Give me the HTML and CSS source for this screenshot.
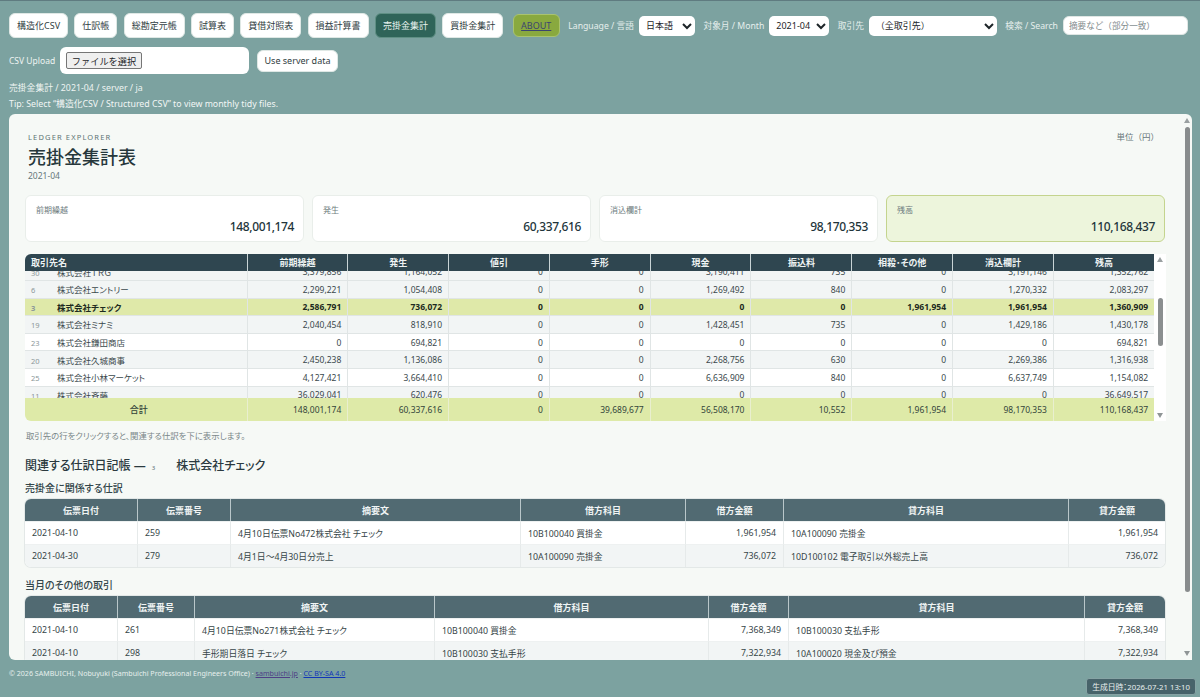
FILE: index.html
```html
<!DOCTYPE html>
<html lang="ja">
<head>
<meta charset="utf-8">
<title>売掛金集計表</title>
<link rel="stylesheet" href="styles.css">
</head>
<body>
<header class="top">
  <div class="row-nav">
    <nav class="tabs">
      <button class="tab">構造化CSV</button>
      <button class="tab">仕訳帳</button>
      <button class="tab">総勘定元帳</button>
      <button class="tab">試算表</button>
      <button class="tab">貸借対照表</button>
      <button class="tab">損益計算書</button>
      <button class="tab active">売掛金集計</button>
      <button class="tab">買掛金集計</button>
    </nav>
    <a class="about" href="#">ABOUT</a>
    <label class="field">Language / 言語
      <select class="sel sel-lang"><option>日本語</option></select>
    </label>
    <label class="field">対象月 / Month
      <select class="sel sel-month"><option>2021-04</option></select>
    </label>
    <label class="field">取引先
      <select class="sel sel-party"><option>（全取引先）</option></select>
    </label>
    <label class="field">検索 / Search
      <input class="search" placeholder="摘要など（部分一致）">
    </label>
  </div>
  <div class="row-upload">
    <span class="upl-label">CSV Upload</span>
    <span class="filebox"><span class="filebtn">ファイルを選択</span></span>
    <button class="tab server">Use server data</button>
  </div>
  <div class="crumb">売掛金集計 / 2021-04 / server / ja</div>
  <div class="tip">Tip: Select “構造化CSV / Structured CSV” to view monthly tidy files.</div>
</header>

<main class="panel">
  <div class="sb-main">
    <span class="arrow up"></span><span class="thumb"></span><span class="arrow down"></span>
  </div>
  <div class="head">
    <div>
      <div class="eyebrow">LEDGER EXPLORER</div>
      <h1>売掛金集計表</h1>
      <div class="period">2021-04</div>
    </div>
    <div class="unit">単位（円）</div>
  </div>

  <section class="cards">
    <div class="card"><div class="card-l">前期繰越</div><div class="card-v">148,001,174</div></div>
    <div class="card"><div class="card-l">発生</div><div class="card-v">60,337,616</div></div>
    <div class="card"><div class="card-l">消込欄計</div><div class="card-v">98,170,353</div></div>
    <div class="card hi"><div class="card-l">残高</div><div class="card-v">110,168,437</div></div>
  </section>

  <section class="ledger">
    <div class="ledger-main">
      <table class="lt lt-head">
        <colgroup><col class="c-name"><col span="9" class="c-num"></colgroup>
        <tr><th class="left">取引先名</th><th>前期繰越</th><th>発生</th><th>値引</th><th>手形</th><th>現金</th><th>振込料</th><th>相殺･その他</th><th>消込欄計</th><th>残高</th></tr>
      </table>
      <div class="lt-clip">
        <table class="lt lt-body">
          <colgroup><col class="c-name"><col span="9" class="c-num"></colgroup>
          <tr class="alt"><td class="nm"><i>30</i>株式会社ＴＲＧ</td><td>3,379,856</td><td>1,164,052</td><td>0</td><td>0</td><td>3,190,411</td><td>735</td><td>0</td><td>3,191,146</td><td>1,352,762</td></tr>
          <tr class="alt"><td class="nm"><i>6</i>株式会社エントリー</td><td>2,299,221</td><td>1,054,408</td><td>0</td><td>0</td><td>1,269,492</td><td>840</td><td>0</td><td>1,270,332</td><td>2,083,297</td></tr>
          <tr class="sel-row"><td class="nm"><i>3</i>株式会社チェック</td><td>2,586,791</td><td>736,072</td><td>0</td><td>0</td><td>0</td><td>0</td><td>1,961,954</td><td>1,961,954</td><td>1,360,909</td></tr>
          <tr class="alt"><td class="nm"><i>19</i>株式会社ミナミ</td><td>2,040,454</td><td>818,910</td><td>0</td><td>0</td><td>1,428,451</td><td>735</td><td>0</td><td>1,429,186</td><td>1,430,178</td></tr>
          <tr><td class="nm"><i>23</i>株式会社鎌田商店</td><td>0</td><td>694,821</td><td>0</td><td>0</td><td>0</td><td>0</td><td>0</td><td>0</td><td>694,821</td></tr>
          <tr class="alt"><td class="nm"><i>20</i>株式会社久城商事</td><td>2,450,238</td><td>1,136,086</td><td>0</td><td>0</td><td>2,268,756</td><td>630</td><td>0</td><td>2,269,386</td><td>1,316,938</td></tr>
          <tr><td class="nm"><i>25</i>株式会社小林マーケット</td><td>4,127,421</td><td>3,664,410</td><td>0</td><td>0</td><td>6,636,909</td><td>840</td><td>0</td><td>6,637,749</td><td>1,154,082</td></tr>
          <tr class="alt"><td class="nm"><i>11</i>株式会社斉藤</td><td>36,029,041</td><td>620,476</td><td>0</td><td>0</td><td>0</td><td>0</td><td>0</td><td>0</td><td>36,649,517</td></tr>
        </table>
      </div>
      <table class="lt lt-foot">
        <colgroup><col class="c-name"><col span="9" class="c-num"></colgroup>
        <tr><td class="tot">合計</td><td>148,001,174</td><td>60,337,616</td><td>0</td><td>39,689,677</td><td>56,508,170</td><td>10,552</td><td>1,961,954</td><td>98,170,353</td><td>110,168,437</td></tr>
      </table>
    </div>
    <div class="sb-inner">
      <span class="arrow up"></span><span class="thumb"></span><span class="arrow down"></span>
    </div>
  </section>
  <p class="hint">取引先の行をクリックすると、関連する仕訳を下に表示します。</p>

  <h2 class="rel">関連する仕訳日記帳 — <small>3</small><span>株式会社チェック</span></h2>
  <h3>売掛金に関係する仕訳</h3>
  <table class="jt jt-a">
    <colgroup><col class="a1"><col class="a2"><col class="a3"><col class="a4"><col class="a5"><col class="a6"><col class="a7"></colgroup>
    <tr><th>伝票日付</th><th>伝票番号</th><th>摘要文</th><th>借方科目</th><th>借方金額</th><th>貸方科目</th><th>貸方金額</th></tr>
    <tr><td>2021-04-10</td><td>259</td><td>4月10日伝票No472株式会社 チェック</td><td>10B100040 買掛金</td><td class="r">1,961,954</td><td>10A100090 売掛金</td><td class="r">1,961,954</td></tr>
    <tr class="even"><td>2021-04-30</td><td>279</td><td>4月1日～4月30日分売上</td><td>10A100090 売掛金</td><td class="r">736,072</td><td>10D100102 電子取引以外総売上高</td><td class="r">736,072</td></tr>
  </table>
  <h3 class="second">当月のその他の取引</h3>
  <table class="jt jt-b">
    <colgroup><col class="b1"><col class="b2"><col class="b3"><col class="b4"><col class="b5"><col class="b6"><col class="b7"></colgroup>
    <tr><th>伝票日付</th><th>伝票番号</th><th>摘要文</th><th>借方科目</th><th>借方金額</th><th>貸方科目</th><th>貸方金額</th></tr>
    <tr><td>2021-04-10</td><td>261</td><td>4月10日伝票No271株式会社 チェック</td><td>10B100040 買掛金</td><td class="r">7,368,349</td><td>10B100030 支払手形</td><td class="r">7,368,349</td></tr>
    <tr class="even"><td>2021-04-10</td><td>298</td><td>手形期日落日 チェック</td><td>10B100030 支払手形</td><td class="r">7,322,934</td><td>10A100020 現金及び預金</td><td class="r">7,322,934</td></tr>
  </table>
</main>

<footer class="foot">© 2026 SAMBUICHI, Nobuyuki (Sambuichi Professional Engineers Office) · <a class="visited" href="#">sambuichi.jp</a> · <a class="link" href="#">CC BY-SA 4.0</a></footer>
<div class="stamp">生成日時：2026-07-21 13:10</div>
</body>
</html>
```

FILE: styles.css
```css
* { box-sizing: border-box; }
html, body { height: 100%; }
body {
  margin: 0;
  height: 697px;
  overflow: hidden;
  position: relative;
  display: flex;
  flex-direction: column;
  background: #7ca2a0;
  border-top: 1px solid #5f7b80;
  color: #2b3a3f;
  font-family: "Noto Sans", "Noto Sans CJK JP", sans-serif;
  font-size: 9px;
  font-feature-settings: "palt";
}
.top { padding: 12px 9px 0 9px; color: #eef4f2; height: 113px; flex: none; }
.row-nav { display: flex; align-items: center; height: 25px; }
.tabs { display: flex; gap: 6.3px; }
.tab {
  height: 25px;
  padding: 0 7px;
  border: 1px solid #dfe8e5;
  border-radius: 6px;
  background: #fff;
  color: #2f3d42;
  font: inherit;
  font-size: 9px;
  white-space: nowrap;
  font-feature-settings: normal;
}
.tab.active { background: #2f6459; border-color: #5f8f84; color: #e8f2ee; }
.about {
  margin-left: 9.5px;
  width: 47px;
  height: 23px;
  display: flex;
  align-items: center;
  justify-content: center;
  background: #89a93f;
  border: 1px solid #a9c36f;
  border-radius: 6px;
  color: #3b4470;
  font-size: 9px;
}
.field { display: flex; align-items: center; gap: 5px; margin-left: 8.5px; white-space: nowrap; font-size: 8.7px; color: #e6efed; }
.sel {
  height: 20px;
  border: none;
  border-radius: 5px;
  background: #fff;
  color: #1d2528;
  font: inherit;
  font-size: 9px;
  padding: 0 0 0 3px;
  font-feature-settings: normal;
}
.sel-lang { width: 56px; }
.sel-month { width: 60px; }
.sel-party { width: 128px; }
.search {
  width: 125px;
  height: 19px;
  border: 1px solid #dfe6e4;
  border-radius: 6px;
  padding: 0 5px;
  font: inherit;
  font-size: 8.6px;
  font-feature-settings: normal;
}
.search::placeholder { color: #808a8c; }
.row-upload { display: flex; align-items: center; margin-top: 9px; height: 27px; }
.upl-label { font-size: 8.5px; width: 51px; color: #eef4f2; }
.filebox { width: 189px; height: 27px; background: #fff; border-radius: 6px; padding: 5px 6px; color: #1d2528; }
.filebtn {
  display: flex;
  width: 76px;
  height: 17px;
  align-items: center;
  justify-content: center;
  background: #efefef;
  border: 1px solid #767676;
  border-radius: 2px;
  font-size: 9.2px;
  font-feature-settings: normal;
}
.server { margin-left: 8px; height: 22px; font-size: 9px; width: 81px; padding: 0; }
.crumb { margin-top: 8px; font-size: 8.8px; line-height: 12px; color: #eef4f2; }
.tip { margin-top: 4px; font-size: 8.8px; line-height: 12px; color: #f2f6f5; }

.panel {
  position: relative;
  flex: none;
  height: 546px;
  margin: 0 8px 0 9px;
  padding: 17px 26px 0 16px;
  background: #f6f9f6;
  border-radius: 6px 6px 0 6px;
  overflow: hidden;
}
.head { display: flex; justify-content: space-between; padding-left: 3px; height: 64px; }
.eyebrow { font-size: 7.5px; line-height: 12px; letter-spacing: 1.15px; color: #5d7474; }
h1 { margin: 2px 0 0 0; font-size: 18px; line-height: 24px; font-weight: 500; color: #26373b; }
.period { font-size: 8.5px; line-height: 12px; margin-top: 1px; color: #66777a; }
.unit { font-size: 8.5px; line-height: 12px; color: #66777a; margin-right: 7px; font-feature-settings: normal; }
.cards { display: grid; grid-template-columns: repeat(4, 279px); gap: 8px; }
.card { height: 47px; background: #fff; border: 1px solid #e9eeea; border-radius: 6px; padding: 8px 9px 0 10px; }
.card.hi { background: #edf5dc; border-color: #c4d48e; }
.card-l { font-size: 8px; line-height: 11px; color: #6c7a7c; }
.card-v { text-align: right; font-size: 12px; line-height: 16px; margin-top: 4px; letter-spacing: -.38px; color: #22343a; font-weight: 500; }

.ledger { display: flex; margin-top: 12px; width: 1141px; height: 167px; }
.ledger-main { width: 1129px; flex: none; border-radius: 6px 0 0 6px; overflow: hidden; }
.lt { width: 1129px; border-collapse: collapse; table-layout: fixed; font-size: 8.5px; }
.c-name { width: 222px; }
.c-num { width: 100.8px; }
.lt th {
  height: 17px;
  padding: 0 6px;
  background: #2f4650;
  color: #eef3f3;
  font-size: 9px;
  font-weight: 700;
  border-left: 1px solid #c9d4d6;
}
.lt th:first-child { border-left: none; }
.lt th.left { text-align: left; }
.lt-clip { height: 127px; overflow: hidden; }
.lt-body { margin-top: -8.6px; background: #fff; }
.lt-body td {
  height: 17.6px;
  padding: 0 6px;
  text-align: right;
  border: 1px solid #e0e5e5;
  border-width: 1px 0 1px 1px;
  color: #3a484c;
  white-space: nowrap;
}
.lt-body .alt td { background: #f2f5f5; }
.lt-body .sel-row td { background: #dfe9a9; font-weight: 700; color: #1d2a20; }
.lt-body td.nm { text-align: left; border-left: none; }
.nm i { display: inline-block; width: 26px; font-style: normal; color: #8b9799; font-size: 7.5px; }
.lt-foot td {
  height: 23px;
  padding: 0 6px;
  text-align: right;
  background: #deeaa8;
  border-left: 1px solid #e9efcf;
  color: #33443a;
}
.lt-foot td.tot { text-align: center; border-left: none; padding-left: 12px; padding-right: 6px; font-size: 9px; font-weight: 500; }
.sb-inner, .sb-main { display: flex; flex-direction: column; align-items: center; justify-content: space-between; }
.sb-inner { width: 12px; background: #fff; padding: 3px 0; position: relative; }
.sb-inner .thumb { position: absolute; top: 44px; left: 3.5px; width: 5px; height: 48px; background: #8b8f90; border-radius: 3px; }
.sb-main { position: absolute; top: 0; right: 0; bottom: 0; width: 10px; padding: 4px 0; }
.sb-main .thumb { position: absolute; top: 13px; left: 2.5px; width: 5px; height: 465px; background: #888c8d; border-radius: 3px; }
.arrow { width: 0; height: 0; border-left: 3px solid transparent; border-right: 3px solid transparent; }
.arrow.up { border-bottom: 5px solid #9aa0a1; }
.arrow.down { border-top: 5px solid #8f9596; }

.hint { margin: 9px 0 0 1px; font-size: 8.4px; line-height: 12px; color: #7a8789; }
.rel { margin: 15px 0 0 0; font-size: 12px; line-height: 18px; font-weight: 500; color: #2b3a3f; }
.rel small { font-size: 6px; color: #66777a; margin-left: 3px; }
.rel span { margin-left: 21px; font-weight: 500; }
h3 { margin: 4px 0 0 0; font-size: 10px; line-height: 14px; font-weight: 500; color: #33464a; }
h3.second { margin-top: 11px; }
.jt {
  width: 1140px;
  margin-top: 4px;
  border-collapse: separate;
  border-spacing: 0;
  table-layout: fixed;
  font-size: 8.8px;
  background: #fff;
  border-radius: 6px;
  overflow: hidden;
  box-shadow: 0 0 0 1px #e3e8e7;
}
.jt th {
  height: 22px;
  background: #516a72;
  color: #f0f4f4;
  font-size: 9px;
  font-weight: 700;
  border-left: 1px solid #b9c7ca;
}
.jt td {
  height: 23px;
  padding: 0 7px;
  border-left: 1px solid #e6eaea;
  border-top: 1px solid #eef1f1;
  color: #364548;
  white-space: nowrap;
}
.jt th:first-child, .jt td:first-child { border-left: none; }
.jt td.r { text-align: right; }
.jt .even td { background: #f2f5f5; }
.a1 { width: 112px; } .a2 { width: 93px; } .a3 { width: 290px; } .a4 { width: 165px; } .a5 { width: 98px; } .a6 { width: 285px; } .a7 { width: 97px; }
.b1 { width: 92px; } .b2 { width: 77px; } .b3 { width: 240px; } .b4 { width: 274px; } .b5 { width: 80px; } .b6 { width: 296px; } .b7 { width: 81px; }

.foot { padding: 7px 0 0 9px; font-size: 7.1px; line-height: 12px; color: #e6efed; }
.foot .visited { color: #4f3f86; }
.foot .link { color: #1136b8; }
.stamp {
  position: absolute;
  right: 4px;
  bottom: 2px;
  height: 17px;
  width: 110px;
  display: flex;
  align-items: center;
  justify-content: center;
  background: #47636a;
  border: 1px solid #86a3a4;
  border-radius: 3px;
  color: #e8efef;
  font-size: 7.8px;
  white-space: nowrap;
}
```
